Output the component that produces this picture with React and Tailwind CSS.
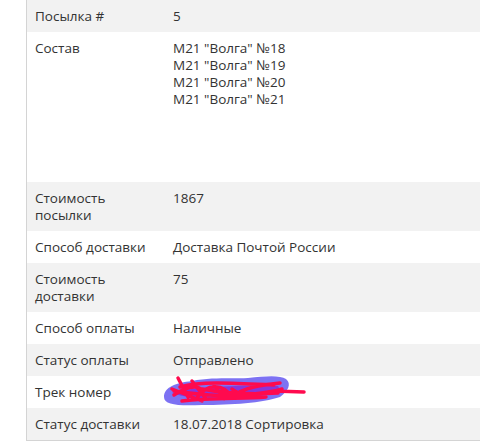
import React from 'react'

const rows = [
  { label: 'Посылка #', value: '5' },
  {
    label: 'Состав',
    value: ['M21 "Волга" №18', 'M21 "Волга" №19', 'M21 "Волга" №20', 'M21 "Волга" №21'],
    tall: true,
  },
  { label: 'Стоимость посылки', value: '1867' },
  { label: 'Способ доставки', value: 'Доставка Почтой России' },
  { label: 'Стоимость доставки', value: '75' },
  { label: 'Способ оплаты', value: 'Наличные' },
  { label: 'Статус оплаты', value: 'Отправлено' },
  { label: 'Трек номер', value: null },
  { label: 'Статус доставки', value: '18.07.2018 Сортировка' },
]

// hand-drawn redaction over the tracking number
const Scribble = () => (
  <svg width="150" height="32" viewBox="0 0 150 32" className="absolute left-[-11px] top-[-9px]">
    <path
      d="M2 22 C2 12 14 8 30 6 C50 2 70 4 86 3 C104 1 118 0 124 4 C130 9 126 16 118 22 C100 28 70 30 40 30 C16 31 2 30 2 22 Z"
      fill="#6f63f2"
      opacity="0.9"
    />
    <path
      d="M10 18 C30 12 70 10 116 11 C120 15 110 20 90 22 C60 25 30 25 10 18 Z"
      fill="#8a2bd6"
      opacity="0.85"
    />
    <path
      d="M16 3 L26 22 M12 20 C30 8 48 10 34 24 C46 6 62 10 70 22 C82 12 100 10 118 8 M12 16 C40 20 70 24 112 16 L142 17 M18 12 C40 6 70 8 112 10 M20 26 C50 22 80 24 104 22 M30 6 L44 24 M52 10 L62 24 M10 14 L40 26 M40 14 C60 18 80 20 116 18 M70 14 C80 22 96 22 120 14"
      stroke="#ff0a4e"
      strokeWidth="3.5"
      fill="none"
      strokeLinecap="round"
      strokeLinejoin="round"
    />
  </svg>
)

const App = () => {
  return (
    <div className="w-[480px] h-[446px] bg-white overflow-hidden font-['Open_Sans',sans-serif] text-[13.5px] leading-[17px] text-[#333]">
      <div className="ml-[26px] w-[470px] border-l border-b border-[#d4d4d4]">
        {rows.map((row, i) => (
          <div
            key={i}
            className={`flex ${i % 2 === 0 ? 'bg-[#f2f2f2]' : 'bg-white'} ${row.tall ? 'h-[150px]' : ''}`}
          >
            <div className="w-[138px] shrink-0 pl-2 pr-2 pt-2 pb-[7px]">{row.label}</div>
            <div className="flex-1 pl-2 pt-2 pb-[7px]">
              {Array.isArray(row.value) ? (
                row.value.map((v) => <div key={v}>{v}</div>)
              ) : row.value === null ? (
                <div className="relative h-[17px]">
                  <Scribble />
                </div>
              ) : (
                row.value
              )}
            </div>
          </div>
        ))}
      </div>
    </div>
  )
}

export default App
